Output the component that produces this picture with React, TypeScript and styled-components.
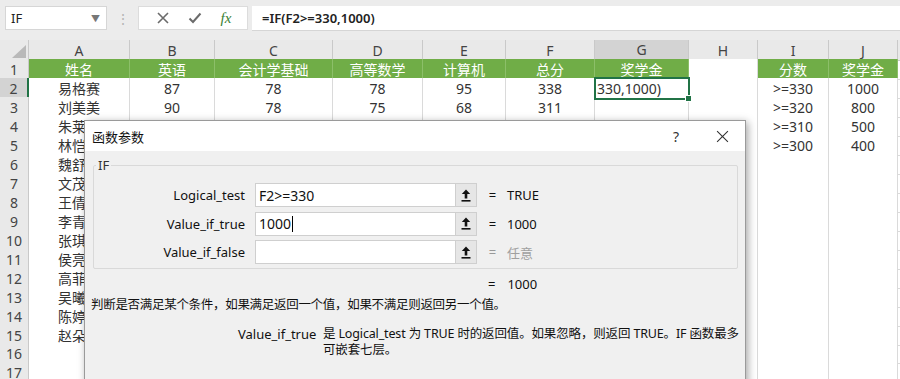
import React from 'react'
import styled, { createGlobalStyle } from 'styled-components'

const UI_FONT = `"Noto Sans", "Noto Sans CJK SC", sans-serif`

const GlobalStyle = createGlobalStyle`
  html, body {
    margin: 0;
    padding: 0;
    background: #ffffff;
  }
  body {
    font-family: ${UI_FONT};
    color: #333;
  }
`

const COL_WIDTHS = [101, 85, 118, 90, 83, 89, 94, 69, 71, 69]
const LETTERS = ['A', 'B', 'C', 'D', 'E', 'F', 'G', 'H', 'I', 'J']
const GRID_COLS = `29px ${COL_WIDTHS.map((w) => `${w}px`).join(' ')} 1fr`

const Page = styled.div`
  position: relative;
  width: 900px;
  height: 379px;
  overflow: hidden;
  background: #fff;
`

/* ---------- formula bar ---------- */

const FormulaBar = styled.div`
  display: flex;
  align-items: flex-start;
  height: 40px;
  box-sizing: border-box;
  padding: 6px 0 0 5px;
  background: #ececec;
`

const NameBox = styled.div`
  width: 102px;
  height: 24px;
  box-sizing: border-box;
  background: #fff;
  border: 1px solid #d6d6d6;
  display: flex;
  align-items: center;
  justify-content: space-between;
  padding: 0 6px 0 5px;
  font-size: 13px;
  color: #222;
`

const Caret = styled.span`
  font-size: 9px;
  color: #777;
`

const Grip = styled.div`
  width: 31px;
  height: 24px;
  display: flex;
  align-items: center;
  justify-content: center;
  color: #b5b5b5;
  font-size: 14px;
`

const ButtonBox = styled.div`
  width: 110px;
  height: 24px;
  box-sizing: border-box;
  background: #fff;
  border: 1px solid #dcdcdc;
  display: flex;
  align-items: center;
  justify-content: space-around;
  padding: 0 6px 0 8px;
`

const FxText = styled.span`
  font-family: "Liberation Serif", serif;
  font-style: italic;
  font-size: 15px;
  color: #3a7f35;
`

const FormulaInput = styled.div`
  flex: 1;
  margin-left: 4px;
  height: 25px;
  box-sizing: border-box;
  background: #fff;
  border-bottom: 1px solid #d6d6d6;
  display: flex;
  align-items: center;
  padding-left: 10px;
  font-size: 13px;
  font-weight: 600;
  color: #222;
`

/* ---------- sheet ---------- */

const Row = styled.div<{ $h: number }>`
  display: grid;
  grid-template-columns: ${GRID_COLS};
  height: ${(p) => p.$h}px;
`

const Corner = styled.div`
  background: #e9e9e9;
  border-right: 1px solid #c9c9c9;
  border-bottom: 1px solid #c9c9c9;
  display: flex;
  align-items: flex-end;
  justify-content: flex-end;
  padding: 0 2px 2px 0;
`

const ColHead = styled.div<{ $active?: boolean }>`
  background: ${(p) => (p.$active ? '#d3d3d3' : '#e9e9e9')};
  border-right: 1px solid #c9c9c9;
  border-bottom: ${(p) => (p.$active ? '2px solid #217346' : '1px solid #c9c9c9')};
  display: flex;
  align-items: center;
  justify-content: center;
  font-size: 14px;
  color: #444;
`

const RowHead = styled.div<{ $active?: boolean }>`
  background: ${(p) => (p.$active ? '#d3d3d3' : '#e9e9e9')};
  border-right: ${(p) => (p.$active ? '2px solid #217346' : '1px solid #c9c9c9')};
  border-bottom: 1px solid #d4d4d4;
  display: flex;
  align-items: center;
  justify-content: center;
  font-size: 14px;
  color: #444;
`

const Cell = styled.div<{ $fill?: boolean; $left?: boolean; $selected?: boolean }>`
  position: relative;
  box-sizing: border-box;
  background: ${(p) => (p.$fill ? '#70ad47' : '#fff')};
  color: ${(p) => (p.$fill ? '#fff' : '#333')};
  border-right: 1px solid ${(p) => (p.$fill ? '#8cbf69' : '#dadada')};
  border-bottom: 1px solid ${(p) => (p.$fill ? '#70ad47' : '#dadada')};
  outline: ${(p) => (p.$selected ? '2px solid #217346' : 'none')};
  outline-offset: -1px;
  z-index: ${(p) => (p.$selected ? 1 : 0)};
  display: flex;
  align-items: center;
  justify-content: ${(p) => (p.$left ? 'flex-start' : 'center')};
  padding-left: ${(p) => (p.$left ? '2px' : '0')};
  font-size: 14px;
  white-space: nowrap;
  overflow: visible;
`

const FillHandle = styled.span`
  position: absolute;
  right: -4px;
  bottom: -4px;
  width: 5px;
  height: 5px;
  background: #217346;
  border: 1px solid #fff;
`

const Filler = styled.div`
  border-bottom: 1px solid #dadada;
`

const HeadFiller = styled.div`
  background: #e9e9e9;
  border-bottom: 1px solid #c9c9c9;
`

type RowData = { cells: string[]; fill?: boolean }

const ROWS: RowData[] = [
  { cells: ['姓名', '英语', '会计学基础', '高等数学', '计算机', '总分', '奖学金', '', '分数', '奖学金'], fill: true },
  { cells: ['易格赛', '87', '78', '78', '95', '338', '330,1000)', '', '>=330', '1000'] },
  { cells: ['刘美美', '90', '78', '75', '68', '311', '', '', '>=320', '800'] },
  { cells: ['朱莱莉', '', '', '', '', '', '', '', '>=310', '500'] },
  { cells: ['林恺东', '', '', '', '', '', '', '', '>=300', '400'] },
  { cells: ['魏舒婷'] },
  { cells: ['文茂林'] },
  { cells: ['王倩倩'] },
  { cells: ['李青青'] },
  { cells: ['张琪琪'] },
  { cells: ['侯亮亮'] },
  { cells: ['高菲菲'] },
  { cells: ['吴曦曦'] },
  { cells: ['陈婷婷'] },
  { cells: ['赵朵朵'] },
  { cells: [] },
  { cells: [] },
]

/* ---------- dialog ---------- */

const Dialog = styled.div`
  position: absolute;
  left: 84px;
  top: 120px;
  width: 662px;
  height: 280px;
  box-sizing: border-box;
  background: #f0f0f0;
  border: 1px solid #9a9a9a;
  box-shadow: 2px 2px 8px rgba(0, 0, 0, 0.35);
  z-index: 5;
  font-family: ${UI_FONT};
  color: #111;
`

const TitleBar = styled.div`
  height: 30px;
  background: #fff;
  display: flex;
  align-items: center;
  padding-left: 7px;
  font-size: 13px;
  color: #111;
`

const TitleText = styled.span`
  flex: 1;
`

const TitleButton = styled.span`
  width: 46px;
  display: flex;
  justify-content: center;
  align-items: center;
  color: #333;
  font-size: 14px;
`

const Group = styled.fieldset`
  margin: 5px 7px 0 8px;
  padding: 9px 0 4px 0;
  border: 1px solid #d9d9d9;
  border-radius: 2px;
`

const Legend = styled.legend`
  margin-left: 2px;
  padding: 0 2px;
  font-size: 13px;
  color: #333;
`

const ParamGrid = styled.div`
  display: grid;
  grid-template-columns: 161px 200px 22px 30px auto;
  grid-auto-rows: 24px;
  row-gap: 4.5px;
  align-items: center;
`

const ParamLabel = styled.div`
  text-align: right;
  padding-right: 10px;
  font-size: 13px;
`

const ParamInput = styled.div`
  height: 24px;
  box-sizing: border-box;
  background: #fff;
  border: 1px solid #cfcfcf;
  border-right: none;
  display: flex;
  align-items: center;
  padding-left: 3px;
  font-size: 14px;
  color: #111;
`

const TextCaret = styled.span`
  display: inline-block;
  width: 1px;
  height: 16px;
  background: #000;
  margin-left: 1px;
`

const RefButton = styled.div`
  width: 22px;
  height: 24px;
  box-sizing: border-box;
  background: #e6e6e6;
  border: 1px solid #cfcfcf;
  display: flex;
  align-items: center;
  justify-content: center;
`

const Equals = styled.div<{ $muted?: boolean }>`
  text-align: center;
  padding-left: 1px;
  font-size: 13px;
  color: ${(p) => (p.$muted ? '#999' : '#111')};
`

const ParamValue = styled.div<{ $muted?: boolean }>`
  font-size: 13px;
  color: ${(p) => (p.$muted ? '#a0a0a0' : '#111')};
`

const ResultRow = styled.div`
  display: flex;
  align-items: center;
  height: 20px;
  margin-top: 5px;
  padding-left: 403px;
  font-size: 13px;
`

const ResultValue = styled.span`
  margin-left: 12px;
`

const Description = styled.div`
  padding-left: 6px;
  height: 18px;
  display: flex;
  align-items: center;
  font-size: 12.5px;
  letter-spacing: -0.3px;
`

const Detail = styled.div`
  display: flex;
  margin-top: 14px;
  padding-left: 153px;
  font-size: 13px;
  line-height: 16px;
`

const DetailLabel = styled.div`
  width: 85px;
  flex: none;
`

const DetailText = styled.div`
  white-space: nowrap;
  font-size: 12.5px;
  letter-spacing: -0.15px;
`

const UpArrow = () => (
  <svg width="10" height="13" viewBox="0 0 10 13">
    <path d="M5 0.5 L9.2 5 L6.3 5 L6.3 9.5 L3.7 9.5 L3.7 5 L0.8 5 Z" fill="#111" />
    <rect x="0.5" y="11" width="9" height="1.6" fill="#111" />
  </svg>
)

const CornerTriangle = () => (
  <svg width="14" height="13" viewBox="0 0 14 13">
    <polygon points="14,0 14,13 0,13" fill="#b9b9b9" />
  </svg>
)

const CrossIcon = ({ size, color, w }: { size: number; color: string; w: number }) => (
  <svg width={size} height={size} viewBox="0 0 12 12">
    <path d="M1 1 L11 11 M11 1 L1 11" stroke={color} strokeWidth={w} fill="none" />
  </svg>
)

const CheckIcon = () => (
  <svg width="14" height="12" viewBox="0 0 14 12">
    <path d="M1.5 6.5 L5 10 L12.5 1.5" stroke="#6b6b6b" strokeWidth="2" fill="none" />
  </svg>
)

const PARAMS = [
  { label: 'Logical_test', value: 'F2>=330', result: 'TRUE' },
  { label: 'Value_if_true', value: '1000', result: '1000', caret: true },
  { label: 'Value_if_false', value: '', result: '任意', muted: true },
]

export default function App() {
  return (
    <Page>
      <GlobalStyle />
      <FormulaBar>
        <NameBox>
          <span>IF</span>
          <Caret>▼</Caret>
        </NameBox>
        <Grip>⋮</Grip>
        <ButtonBox>
          <CrossIcon size={12} color="#6b6b6b" w={1.6} />
          <CheckIcon />
          <FxText>fx</FxText>
        </ButtonBox>
        <FormulaInput>=IF(F2&gt;=330,1000)</FormulaInput>
      </FormulaBar>

      <Row $h={19}>
        <Corner>
          <CornerTriangle />
        </Corner>
        {LETTERS.map((l) => (
          <ColHead key={l} $active={l === 'G'}>
            {l}
          </ColHead>
        ))}
        <HeadFiller />
      </Row>

      {ROWS.map((row, r) => (
        <Row key={r} $h={19}>
          <RowHead $active={r === 1}>{r + 1}</RowHead>
          {LETTERS.map((l, c) => {
            const text = row.cells[c] ?? ''
            const selected = r === 1 && c === 6
            return (
              <Cell key={l} $fill={row.fill && c !== 7} $left={selected} $selected={selected}>
                {text}
                {selected && <FillHandle />}
              </Cell>
            )
          })}
          <Filler />
        </Row>
      ))}

      <Dialog>
        <TitleBar>
          <TitleText>函数参数</TitleText>
          <TitleButton>?</TitleButton>
          <TitleButton>
            <CrossIcon size={13} color="#333" w={1} />
          </TitleButton>
        </TitleBar>

        <Group>
          <Legend>IF</Legend>
          <ParamGrid>
            {PARAMS.map((p) => (
              <React.Fragment key={p.label}>
                <ParamLabel>{p.label}</ParamLabel>
                <ParamInput>
                  {p.value}
                  {p.caret && <TextCaret />}
                </ParamInput>
                <RefButton>
                  <UpArrow />
                </RefButton>
                <Equals $muted={p.muted}>=</Equals>
                <ParamValue $muted={p.muted}>{p.result}</ParamValue>
              </React.Fragment>
            ))}
          </ParamGrid>
        </Group>

        <ResultRow>
          <span>=</span>
          <ResultValue>1000</ResultValue>
        </ResultRow>
        <Description>判断是否满足某个条件，如果满足返回一个值，如果不满足则返回另一个值。</Description>
        <Detail>
          <DetailLabel>Value_if_true</DetailLabel>
          <DetailText>
            是 Logical_test 为 TRUE 时的返回值。如果忽略，则返回 TRUE。IF 函数最多
            <br />
            可嵌套七层。
          </DetailText>
        </Detail>
      </Dialog>
    </Page>
  )
}
